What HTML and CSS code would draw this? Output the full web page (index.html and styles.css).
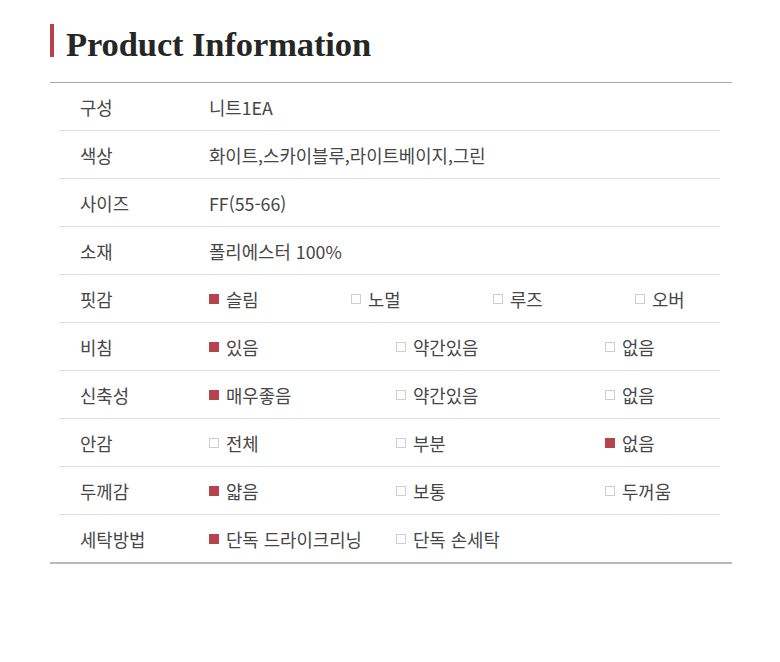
FILE: index.html
```html
<!DOCTYPE html>
<html lang="ko">
<head>
<meta charset="utf-8">
<title>Product Information</title>
<link rel="stylesheet" href="styles.css">
</head>
<body>
<div class="page">
  <h2 class="title"><span class="bar"></span><span class="title-text">Product Information</span></h2>
  <div class="table">
    <div class="row"><div class="label">구성</div><div class="value">니트1EA</div></div>
    <div class="row"><div class="label">색상</div><div class="value">화이트,스카이블루,라이트베이지,그린</div></div>
    <div class="row"><div class="label">사이즈</div><div class="value">FF(55-66)</div></div>
    <div class="row"><div class="label">소재</div><div class="value">폴리에스터 100%</div></div>
    <div class="row"><div class="label">핏감</div>
      <div class="value opts four">
        <span class="opt"><i class="box on"></i>슬림</span>
        <span class="opt"><i class="box"></i>노멀</span>
        <span class="opt"><i class="box"></i>루즈</span>
        <span class="opt"><i class="box"></i>오버</span>
      </div></div>
    <div class="row"><div class="label">비침</div>
      <div class="value opts three">
        <span class="opt"><i class="box on"></i>있음</span>
        <span class="opt"><i class="box"></i>약간있음</span>
        <span class="opt"><i class="box"></i>없음</span>
      </div></div>
    <div class="row"><div class="label">신축성</div>
      <div class="value opts three">
        <span class="opt"><i class="box on"></i>매우좋음</span>
        <span class="opt"><i class="box"></i>약간있음</span>
        <span class="opt"><i class="box"></i>없음</span>
      </div></div>
    <div class="row"><div class="label">안감</div>
      <div class="value opts three">
        <span class="opt"><i class="box"></i>전체</span>
        <span class="opt"><i class="box"></i>부분</span>
        <span class="opt"><i class="box on"></i>없음</span>
      </div></div>
    <div class="row"><div class="label">두께감</div>
      <div class="value opts three">
        <span class="opt"><i class="box on"></i>얇음</span>
        <span class="opt"><i class="box"></i>보통</span>
        <span class="opt"><i class="box"></i>두꺼움</span>
      </div></div>
    <div class="row"><div class="label">세탁방법</div>
      <div class="value opts three">
        <span class="opt"><i class="box on"></i>단독 드라이크리닝</span>
        <span class="opt"><i class="box"></i>단독 손세탁</span>
      </div></div>
  </div>
</div>
</body>
</html>
```
FILE: styles.css
```css
html, body {
  margin: 0;
  padding: 0;
  background: #ffffff;
}
.page {
  padding: 24px 0 0 50px;
  width: 682px;
}
.title {
  margin: 0;
  display: flex;
  align-items: center;
  height: 33px;
}
.bar {
  width: 4px;
  height: 33px;
  background: #b5434b;
  margin-right: 12px;
}
.title-text {
  font-family: "Liberation Serif", serif;
  font-weight: bold;
  font-size: 34.5px;
  color: #262626;
  letter-spacing: -0.1px;
  line-height: 33px;
  position: relative;
  top: 4px;
}
.table {
  margin-top: 25px;
  border-top: 1px solid #a8a8a8;
  border-bottom: 2px solid #b8b8b8;
}
.row {
  margin: 0 12px 0 10px;
  height: 47px;
  border-bottom: 1px solid #dcdcdc;
  display: grid;
  grid-template-columns: 149px 1fr;
  align-items: center;
  font-family: "Noto Sans CJK KR", "Noto Sans", sans-serif;
  font-size: 17.8px;
  color: #464646;
}
.row:last-child {
  border-bottom: none;
}
.label {
  padding-left: 20px;
}
.opts {
  display: grid;
  align-items: center;
}
.opts.four {
  grid-template-columns: 142px 142px 142px 1fr;
}
.opts.three {
  grid-template-columns: 187px 209px 1fr;
}
.opt {
  display: flex;
  align-items: center;
  white-space: nowrap;
}
.box {
  display: inline-block;
  width: 8px;
  height: 8px;
  border: 1px solid #cfcfcf;
  margin-right: 7px;
  box-sizing: content-box;
}
.box.on {
  background: #b5434b;
  border-color: #b5434b;
}
```
